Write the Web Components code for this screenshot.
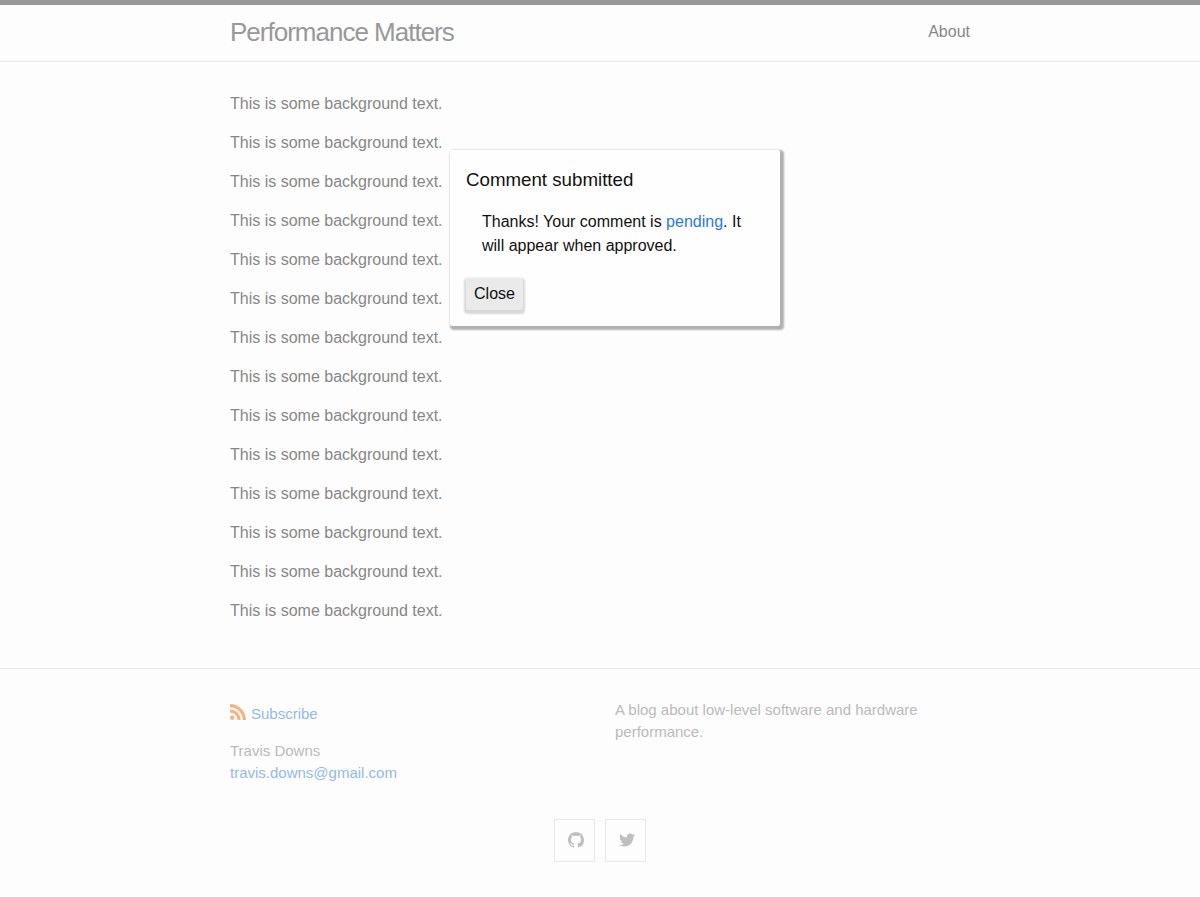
<!DOCTYPE html>
<html lang="en">
<head>
<meta charset="utf-8">
<title>Performance Matters</title>
<style>
body { margin: 0; background: #fdfdfd; font: 16px/24px "Liberation Sans", Arial, sans-serif; color: #878787; }
</style>
</head>
<body>
<blog-page></blog-page>
<script>
const define = (name, html) => {
  const t = document.createElement('template');
  t.innerHTML = html;
  customElements.define(name, class extends HTMLElement {
    constructor() {
      super();
      this.attachShadow({ mode: 'open' }).append(t.content.cloneNode(true));
    }
  });
};

define('site-header', `
<style>
:host { display: block; box-sizing: border-box; height: 62px; border-top: 5px solid #989898; border-bottom: 1px solid #e8e8e8; }
.wrap { width: 740px; margin: 0 auto; display: flex; justify-content: space-between; line-height: 54px; }
.title { font-size: 26px; letter-spacing: -1px; color: #989898; }
</style>
<div class="wrap"><span class="title"><slot></slot></span><nav><slot name="nav"></slot></nav></div>`);

define('blog-text', `
<style>:host { display: block; margin-bottom: 15px; }</style><slot></slot>`);

define('soft-button', `
<style>
:host { display: inline-block; }
button { display: block; font: inherit; color: #111; background: #eaeaea; border: 0; border-radius: 2px; margin: 0; padding: 4px 8px; width: 57px; height: 32px; box-shadow: 0 2px 2px 2px rgba(0,0,0,.15); white-space: nowrap; }
</style><button><slot></slot></button>`);

define('message-dialog', `
<style>
:host { position: absolute; left: 450px; top: 150px; width: 330px; height: 176px; box-sizing: border-box; padding: 16px; background: #fefefe; color: #111; border-radius: 2px; box-shadow: 2px 2px 2px 2px rgba(0,0,0,.3); }
h3 { margin: 0; font-weight: 400; font-size: 18.72px; line-height: 28px; }
.body { padding: 16px 16px 0; }
.actions { margin-top: 20px; display: flex; }
</style>
<h3><slot name="title"></slot></h3>
<div class="body"><slot></slot></div>
<div class="actions"><slot name="actions"></slot></div>`);

define('icon-box', `
<style>
:host { display: flex; box-sizing: border-box; width: 41px; height: 43px; border: 1px solid #e8e8e8; padding: 12px 0 0 13px; color: #bfbfbf; }
</style><slot></slot>`);

define('site-footer', `
<style>
:host { display: block; border-top: 1px solid #e8e8e8; padding: 30px 0; font-size: 15px; line-height: 22px; color: #bababa; }
.wrap { width: 740px; margin: 0 auto; }
.cols { display: grid; grid-template-columns: 385px 355px; }
.feed { display: flex; gap: 5px; padding-top: 4px; margin-bottom: 15px; }
.feed svg { margin-top: 1px; }
.link { color: #93b9ec; }
.contact { margin-bottom: 35px; }
.social { display: flex; justify-content: center; gap: 10px; }
svg { display: block; fill: currentColor; }
</style>
<div class="wrap">
<div class="cols">
<div>
<div class="feed link"><svg width="16" height="16" viewBox="0 0 16 16" style="color:#f9b27f"><path d="M12.8 16C12.8 8.978 7.022 3.2 0 3.2V0c8.777 0 16 7.223 16 16h-3.2zM2.194 11.61c1.21 0 2.195.985 2.195 2.196 0 1.21-.99 2.194-2.2 2.194C.98 16 0 15.017 0 13.806c0-1.21.983-2.195 2.194-2.195zM10.606 16h-3.11c0-4.113-3.383-7.497-7.496-7.497v-3.11c5.818 0 10.606 4.79 10.606 10.607z"/></svg><span>Subscribe</span></div>
<div class="contact"><div>Travis Downs</div><div class="link">travis.downs@gmail.com</div></div>
</div>
<div>A blog about low-level software and hardware performance.</div>
</div>
<div class="social">
<icon-box><svg width="16" height="16" viewBox="0 0 16 16"><path d="M8 0C3.58 0 0 3.58 0 8c0 3.54 2.29 6.53 5.47 7.59.4.07.55-.17.55-.38 0-.19-.01-.82-.01-1.49-2.01.37-2.53-.49-2.69-.94-.09-.23-.48-.94-.82-1.13-.28-.15-.68-.52-.01-.53.63-.01 1.08.58 1.23.82.72 1.21 1.87.87 2.33.66.07-.52.28-.87.51-1.07-1.78-.2-3.64-.89-3.64-3.95 0-.87.31-1.59.82-2.15-.08-.2-.36-1.02.08-2.12 0 0 .67-.21 2.2.82.64-.18 1.32-.27 2-.27s1.36.09 2 .27c1.53-1.04 2.2-.82 2.2-.82.44 1.1.16 1.92.08 2.12.51.56.82 1.27.82 2.15 0 3.07-1.87 3.75-3.65 3.95.29.25.54.73.54 1.48 0 1.07-.01 1.93-.01 2.2 0 .21.15.46.55.38A8.01 8.01 0 0 0 16 8c0-4.42-3.58-8-8-8z"/></svg></icon-box>
<icon-box><svg width="16" height="16" viewBox="0 0 16 16"><path d="M15.969,3.058c-0.586,0.26-1.217,0.436-1.878,0.515c0.675-0.405,1.194-1.045,1.438-1.809c-0.632,0.375-1.332,0.647-2.076,0.793c-0.596-0.636-1.446-1.033-2.387-1.033c-1.806,0-3.27,1.464-3.27,3.27c0,0.256,0.029,0.506,0.085,0.745C5.163,5.404,2.753,4.102,1.14,2.124C0.859,2.607,0.698,3.168,0.698,3.767c0,1.134,0.577,2.135,1.455,2.722C1.616,6.472,1.112,6.325,0.671,6.08c0,0.014,0,0.027,0,0.041c0,1.584,1.127,2.906,2.623,3.206C3.02,9.402,2.731,9.442,2.433,9.442c-0.211,0-0.416-0.021-0.615-0.059c0.416,1.299,1.624,2.245,3.055,2.271c-1.119,0.877-2.529,1.4-4.061,1.4c-0.264,0-0.524-0.015-0.78-0.046c1.447,0.928,3.166,1.469,5.013,1.469c6.015,0,9.304-4.983,9.304-9.304c0-0.142-0.003-0.283-0.009-0.423C14.976,4.29,15.531,3.714,15.969,3.058z"/></svg></icon-box>
</div>
</div>`);

customElements.define('blog-page', class extends HTMLElement {
  constructor() {
    super();
    const lines = '<blog-text>This is some background text.</blog-text>'.repeat(14);
    this.attachShadow({ mode: 'open' }).innerHTML = `
<style>
:host { display: block; }
main { width: 740px; margin: 0 auto; padding: 30px 0; }
.accent { color: #2a7ae2; }
</style>
<site-header>Performance Matters<span slot="nav">About</span></site-header>
<main>${lines}</main>
<site-footer></site-footer>
<message-dialog><span slot="title">Comment submitted</span>Thanks! Your comment is <span class="accent">pending</span>. It will appear when approved.<soft-button slot="actions">Close</soft-button></message-dialog>`;
  }
});
</script>
</body>
</html>
